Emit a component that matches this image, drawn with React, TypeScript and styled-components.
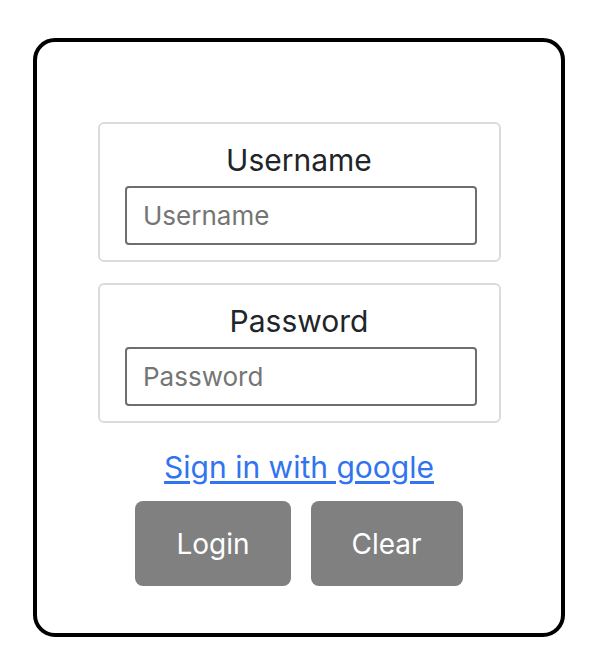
import React from 'react';
import styled, { createGlobalStyle } from 'styled-components';

const GlobalStyle = createGlobalStyle`
  body {
    margin: 0;
    background: #ffffff;
    font-family: Inter, "Liberation Sans", sans-serif;
  }
`;

type FieldProps = {
  label: string;
  type?: string;
};

const Field = ({ label, type = 'text' }: FieldProps) => {
  return (
    <FieldBox>
      <FieldLabel>{label}</FieldLabel>
      <FieldInput type={type} placeholder={label} />
    </FieldBox>
  );
};

const App = () => {
  return (
    <>
      <GlobalStyle />
      <Card>
        <Field label="Username" />
        <Field label="Password" type="password" />
        <GoogleLink href="#">Sign in with google</GoogleLink>
        <ButtonRow>
          <ActionButton type="button">Login</ActionButton>
          <ActionButton type="button">Clear</ActionButton>
        </ButtonRow>
      </Card>
    </>
  );
};

export default App;

const Card = styled.div`
  box-sizing: border-box;
  width: 532px;
  height: 599px;
  margin: 38px 0 0 33px;
  border: 4px solid #000;
  border-radius: 22px;
  padding-top: 80px;
  display: flex;
  flex-direction: column;
  align-items: center;
`;

const FieldBox = styled.div`
  box-sizing: border-box;
  width: 403px;
  height: 140px;
  margin-bottom: 21px;
  border: 2px solid #d9dbde;
  border-radius: 6px;
  padding-top: 18px;
  display: flex;
  flex-direction: column;
  align-items: center;
`;

const FieldLabel = styled.label`
  font-size: 30px;
  line-height: 36px;
  color: #212529;
  margin-bottom: 8px;
`;

const FieldInput = styled.input`
  box-sizing: border-box;
  width: 352px;
  height: 59px;
  margin-left: 4px;
  border: 2px solid #6e6e6e;
  border-radius: 4px;
  padding: 0 16px;
  font-family: inherit;
  font-size: 26px;
  color: #212529;
  outline: none;

  &::placeholder {
    color: #757575;
  }
`;

const GoogleLink = styled.a`
  margin-top: 5px;
  font-size: 30px;
  line-height: 36px;
  color: #3174ef;
  text-decoration: underline;
  text-underline-offset: 3px;
`;

const ButtonRow = styled.div`
  display: flex;
  gap: 20px;
  margin-top: 16px;
`;

const ActionButton = styled.button`
  height: 85px;
  padding: 0 41px;
  border: none;
  border-radius: 8px;
  background: #808080;
  color: #ffffff;
  font-family: inherit;
  font-size: 28px;
`;
